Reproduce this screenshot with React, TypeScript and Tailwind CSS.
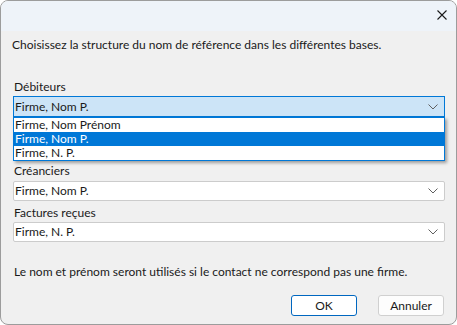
import { useState } from "react";

const options = ["Firme, Nom Prénom", "Firme, Nom P.", "Firme, N. P."];

function Chevron() {
  return (
    <svg width="10" height="6" viewBox="0 0 10 6" className="shrink-0">
      <path d="M0.5 0.5 L5 5 L9.5 0.5" fill="none" stroke="#606060" strokeWidth="1" />
    </svg>
  );
}

function Select({ value, active }: { value: string; active?: boolean }) {
  return (
    <div
      className={
        active
          ? "ml-[1px] w-[432px] h-[21px] flex items-center justify-between pl-[1px] pr-[6px] bg-[#cce4f7] border border-[#0078d7]"
          : "ml-[1px] w-[432px] h-[20px] flex items-center justify-between pl-[1px] pr-[6px] bg-white border border-[#cccccc] rounded-[2px]"
      }
    >
      <span>{value}</span>
      <Chevron />
    </div>
  );
}

export default function App() {
  const [selected] = useState(1);

  return (
    <div
      className="relative w-[457px] h-[325px] bg-[#f0f0f0] border border-[#9c9c9c] rounded-[8px] overflow-hidden flex flex-col text-[12px] text-[#1a1a1a]"
      style={{ fontFamily: 'Lato, "Liberation Sans", Arial, sans-serif' }}
    >
      <div className="h-[30px] shrink-0 bg-[#eef3f9] flex items-start justify-end pr-[9px] pt-[9px]">
        <svg width="10" height="10" viewBox="0 0 10 10">
          <path d="M0.5 0.5 L9.5 9.5 M9.5 0.5 L0.5 9.5" stroke="#1a1a1a" strokeWidth="1.1" />
        </svg>
      </div>

      <div className="flex flex-col pl-[11px] pr-[11px]">
        <p className="mt-[6px] leading-[16px]">Choisissez la structure du nom de référence dans les différentes bases.</p>

        <label className="mt-[26px] ml-[2px] leading-[16px]">Débiteurs</label>
        <div className="mt-[1px]">
          <Select value="Firme, Nom P." active />
        </div>

        <label className="mt-[46px] ml-[2px] leading-[16px]">Créanciers</label>
        <div className="mt-[2px]">
          <Select value="Firme, Nom P." />
        </div>

        <label className="mt-[4px] ml-[2px] leading-[16px]">Factures reçues</label>
        <div className="mt-[1px]">
          <Select value="Firme, N. P." />
        </div>

        <p className="mt-[22px] ml-[2px] leading-[16px]">Le nom et prénom seront utilisés si le contact ne correspond pas une firme.</p>

        <div className="mt-[15px] flex justify-end gap-[21px] pr-[1px]">
          <button className="w-[66px] h-[21px] bg-white border border-[#0067c0] rounded-[3px] leading-none">OK</button>
          <button className="w-[66px] h-[21px] bg-[#fdfdfd] border border-[#d0d0d0] rounded-[3px] leading-none">Annuler</button>
        </div>
      </div>

      <ul className="absolute left-[12px] top-[116px] w-[432px] bg-white border border-[#0078d7] shadow-[2px_2px_3px_rgba(0,0,0,0.35)]">
        {options.map((o, i) => (
          <li
            key={o}
            className={
              i === selected
                ? "h-[14px] leading-[14px] pl-[1px] bg-[#0078d7] text-white"
                : "h-[14px] leading-[14px] pl-[1px]"
            }
          >
            {o}
          </li>
        ))}
      </ul>
    </div>
  );
}
